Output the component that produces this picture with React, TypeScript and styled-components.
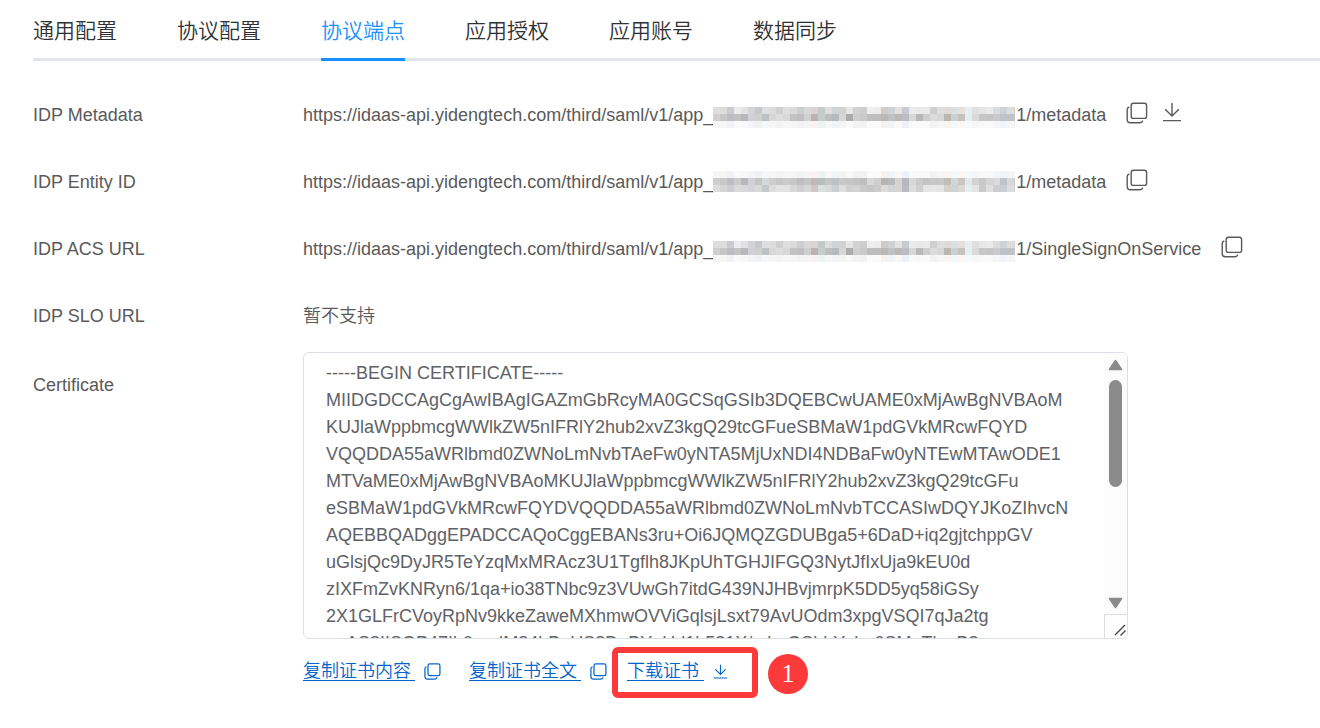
import React, { useState } from "react";
import styled, { createGlobalStyle } from "styled-components";

const GlobalStyle = createGlobalStyle`
  *, *::before, *::after { box-sizing: border-box; }
  body {
    margin: 0;
    background: #fff;
    color: #5a5a5a;
    font-family: "Liberation Sans", "Noto Sans CJK SC", sans-serif;
    font-size: 18px;
    line-height: 27px;
  }
  button, textarea { font: inherit; color: inherit; }
`;

const Page = styled.main`
  padding-left: 33px;
`;

const TabBar = styled.div`
  display: flex;
  gap: 60px;
  border-bottom: 3px solid #dfe4ed;
`;

const Tab = styled.button<{ $active: boolean }>`
  margin: 0 0 -3px;
  padding: 16px 0 12px;
  border: 0;
  border-bottom: 3px solid ${(p) => (p.$active ? "#1890ff" : "transparent")};
  background: none;
  color: ${(p) => (p.$active ? "#1890ff" : "#303133")};
  font-size: 21px;
  font-weight: 350;
  line-height: 30px;
  white-space: nowrap;
  cursor: pointer;
`;

const Endpoints = styled.section`
  padding-top: 21px;
`;

const Row = styled.div`
  display: grid;
  grid-template-columns: 270px minmax(0, 1fr);
  min-height: 67px;
  padding-top: 20px;
`;

const Label = styled.span`
  white-space: nowrap;
`;

const Value = styled.div`
  display: flex;
  align-items: center;
  height: 27px;
  font-weight: 350;
  white-space: nowrap;
`;

const RowIcons = styled.div`
  display: flex;
  gap: 14px;
  margin-left: 20px;
  padding-bottom: 6px;
`;

const IconButton = styled.button`
  display: flex;
  padding: 0;
  border: 0;
  background: none;
  cursor: pointer;
`;

const MosaicSvg = styled.svg<{ $raised: boolean }>`
  flex: none;
  display: block;
  margin: ${(p) => (p.$raised ? "0 1px 2px 0" : "4px 1px 0 0")};
`;

const CertRow = styled(Row)`
  padding-top: 2px;
`;

const CertLabel = styled.label`
  padding-top: 20px;
`;

const CertFrame = styled.div`
  display: flex;
  width: 100%;
  max-width: 825px;
  height: 287px;
  border: 1px solid #dcdfe6;
  border-radius: 6px;
  overflow: hidden;
`;

const CertText = styled.textarea`
  flex: 1;
  min-width: 0;
  padding: 7px 0 0 22px;
  border: 0;
  outline: 0;
  resize: none;
  background: none;
  color: #606266;
  white-space: pre;
  scrollbar-width: none;
`;

const ScrollTrack = styled.div`
  display: flex;
  flex-direction: column;
  align-items: center;
  width: 23px;
  padding-top: 6px;
  background: #fcfcfc;
`;

const Thumb = styled.div`
  width: 13px;
  height: 107px;
  margin: 9px 0 auto;
  border-radius: 7px;
  background: #8b8b8b;
`;

const Corner = styled.div`
  width: 23px;
  height: 24px;
  margin-top: 5px;
  border: solid #dcdcdc;
  border-width: 1px 0 0 1px;
  background: #fff;
`;

const Actions = styled.div`
  display: flex;
  align-items: center;
  height: 51px;
  margin-top: 8px;
  color: #0066cc;
  font-weight: 350;
`;

const ActionLink = styled.a`
  display: flex;
  align-items: center;
  gap: 9px;
  margin-right: 28px;
  padding-bottom: 2px;
  color: inherit;
  text-decoration: none;
  white-space: nowrap;
`;

const LinkText = styled.span`
  width: 112px;
  height: 18px;
  border-bottom: 1px solid currentColor;
  line-height: 17px;
`;

const ShortLinkText = styled(LinkText)`
  width: 77px;
`;

const Highlight = styled.div`
  display: flex;
  align-items: center;
  width: 146px;
  height: 51px;
  margin: 0 10px 0 -23px;
  padding-left: 9px;
  border: 6px solid #fc3a3a;
  border-radius: 6px;
`;

const StepBadge = styled.span`
  width: 40px;
  height: 40px;
  margin-top: 2px;
  border-radius: 50%;
  background: #fc3a3a;
  color: #fff;
  font-family: "Liberation Serif", serif;
  font-size: 25px;
  font-weight: 400;
  line-height: 40px;
  text-align: center;
`;

const CopyIcon = ({ size = 22 }: { size?: number }) => (
  <svg width={size} height={size} viewBox="0 0 22 22" fill="none" stroke="currentColor" strokeWidth={size < 20 ? 1.6 : 1.4} strokeLinecap="round">
    <rect x="5.2" y="1.2" width="15.4" height="15.2" rx="2.2" />
    <path d="M2.9 5.2Q1.2 5.6 1.2 7.6V17.6Q1.2 20.8 4.4 20.8H13.6Q16 20.8 16.6 19.1" />
  </svg>
);

const DownloadIcon = ({ size = 20 }: { size?: number }) => (
  <svg width={size} height={size} viewBox="0 0 20 20" fill="none" stroke="currentColor" strokeWidth={size < 20 ? 1.5 : 1.4}>
    <path d="M10 1V14M3.2 7.2L10 14L16.8 7.2M1 18.6H19" />
  </svg>
);

// Grey levels of the pixelated app id, one hex pair per 7px cell.
const levels = (text: string) => text.split(" ").map((pair) => parseInt(pair, 16));

const lightBand = levels(
  "dd dc cb ec e2 d4 c8 df dc d0 df da ce d8 d5 c8 de d4 d2 e6 d1 cd ee ec cd d2 e2 cb eb e9 ea cf de db de e0 ec e0 e6 ea db d1 dd d0"
);
const darkBand = levels(
  "cf c6 bd c2 b8 d1 cf c0 d7 dd d8 c2 bf cf b5 ca be bb d6 ac ce c9 be be b8 c2 b9 be d7 b8 ce dc d7 b7 ce c2 ec da c7 c5 cb c2 c2 c5"
);
const raisedDarkBand = levels(
  "cf c8 bf cc b8 d1 c5 d8 cf c6 cb c7 be c5 bb bc c5 c2 c9 c6 c3 bf d7 d0 b5 bb d4 b9 d8 cb c4 c7 c8 bf d5 c6 e6 d3 c9 d5 da c2 d8 c8"
);
const raisedLightBand = levels(
  "dc d5 ce da d8 d4 d9 c7 dd e4 e2 d7 cf d8 ca de d9 d0 df d0 d2 c9 c6 cb db d4 d5 bc dd cf e6 e7 e6 d1 d2 d8 ec e4 cb e0 cd ce dc cf"
);
const fadedBand = lightBand.map((level) => 255 - Math.round((255 - level) / 4));

const tints: Record<number, [number, number, number]> = {
  2: [-2, 0, 5], 5: [-2, 0, 3], 7: [-2, 1, 1], 12: [-2, 0, 4], 14: [5, -3, -2], 15: [-4, 2, 0],
  17: [-3, 0, 2], 24: [4, -1, -5], 25: [-5, 0, 4], 26: [5, -1, -5], 27: [-6, 0, 7],
  33: [3, -1, -5], 34: [-5, 2, 6], 35: [6, -1, -6], 36: [-8, 2, 9], 40: [-2, 0, 3], 41: [-3, 0, 5],
};

const cellColor = (base: number, column: number) => {
  const tint = tints[column] ?? [0, 0, 0];
  return `rgb(${tint.map((t) => Math.min(255, base + t)).join(",")})`;
};

const Mosaic = ({ raised }: { raised: boolean }) => {
  const bands = raised ? [fadedBand, raisedDarkBand, raisedLightBand] : [lightBand, darkBand, fadedBand];
  return (
    <MosaicSvg $raised={raised} width={302} height={21} viewBox="0 0 302 21" shapeRendering="crispEdges" aria-hidden="true">
      {bands.map((band, row) =>
        band.map((level, column) => (
          <rect key={`${row}-${column}`} x={column * 7} y={row * 7} width={7} height={7} fill={cellColor(level, column)} />
        ))
      )}
    </MosaicSvg>
  );
};

const tabs = ["通用配置", "协议配置", "协议端点", "应用授权", "应用账号", "数据同步"];

const endpoints = [
  { label: "IDP Metadata", suffix: "1/metadata", download: true, raised: false },
  { label: "IDP Entity ID", suffix: "1/metadata", download: false, raised: true },
  { label: "IDP ACS URL", suffix: "1/SingleSignOnService", download: false, raised: false },
];

const certificate = `-----BEGIN CERTIFICATE-----
MIIDGDCCAgCgAwIBAgIGAZmGbRcyMA0GCSqGSIb3DQEBCwUAME0xMjAwBgNVBAoM
KUJlaWppbmcgWWlkZW5nIFRlY2hub2xvZ3kgQ29tcGFueSBMaW1pdGVkMRcwFQYD
VQQDDA55aWRlbmd0ZWNoLmNvbTAeFw0yNTA5MjUxNDI4NDBaFw0yNTEwMTAwODE1
MTVaME0xMjAwBgNVBAoMKUJlaWppbmcgWWlkZW5nIFRlY2hub2xvZ3kgQ29tcGFu
eSBMaW1pdGVkMRcwFQYDVQQDDA55aWRlbmd0ZWNoLmNvbTCCASIwDQYJKoZIhvcN
AQEBBQADggEPADCCAQoCggEBANs3ru+Oi6JQMQZGDUBga5+6DaD+iq2gjtchppGV
uGlsjQc9DyJR5TeYzqMxMRAcz3U1Tgflh8JKpUhTGHJIFGQ3NytJfIxUja9kEU0d
zIXFmZvKNRyn6/1qa+io38TNbc9z3VUwGh7itdG439NJHBvjmrpK5DD5yq58iGSy
2X1GLFrCVoyRpNv9kkeZaweMXhmwOVViGqlsjLsxt79AvUOdm3xpgVSQI7qJa2tg
nnAS8IISOP47Ih0nndM84hBnUS8DnBYnUd1h581X/mhnGShhYzhn6SMnTlnnB8gg`;

export default function App() {
  const [active, setActive] = useState(2);
  return (
    <Page>
      <GlobalStyle />
      <TabBar role="tablist">
        {tabs.map((tab, i) => (
          <Tab key={tab} role="tab" aria-selected={i === active} $active={i === active} onClick={() => setActive(i)}>
            {tab}
          </Tab>
        ))}
      </TabBar>
      <Endpoints>
        {endpoints.map((item) => (
          <Row key={item.label}>
            <Label>{item.label}</Label>
            <Value>
              <span>https://idaas-api.yidengtech.com/third/saml/v1/app_</span>
              <Mosaic raised={item.raised} />
              <span>{item.suffix}</span>
              <RowIcons>
                <IconButton aria-label={`复制 ${item.label}`}><CopyIcon /></IconButton>
                {item.download && <IconButton aria-label={`下载 ${item.label}`}><DownloadIcon /></IconButton>}
              </RowIcons>
            </Value>
          </Row>
        ))}
        <Row>
          <Label>IDP SLO URL</Label>
          <Value>暂不支持</Value>
        </Row>
        <CertRow>
          <CertLabel htmlFor="certificate">Certificate</CertLabel>
          <div>
            <CertFrame>
              <CertText id="certificate" readOnly spellCheck={false} value={certificate} />
              <ScrollTrack aria-hidden="true">
                <svg width="15" height="12" viewBox="0 0 15 12">
                  <path d="M7.5 1.8L13.3 10.3H1.7Z" fill="#8b8b8b" stroke="#8b8b8b" strokeWidth="2" strokeLinejoin="round" />
                </svg>
                <Thumb />
                <svg width="15" height="12" viewBox="0 0 15 12">
                  <path d="M7.5 10.2L13.3 1.7H1.7Z" fill="#8b8b8b" stroke="#8b8b8b" strokeWidth="2" strokeLinejoin="round" />
                </svg>
                <Corner>
                  <svg width="22" height="22" viewBox="0 0 22 22" fill="none" stroke="#444" strokeWidth="1.4">
                    <path d="M10 20L20 10M15.5 20.5L20.5 15.5" />
                  </svg>
                </Corner>
              </ScrollTrack>
            </CertFrame>
            <Actions>
              <ActionLink href="#copy-content"><LinkText>复制证书内容</LinkText><CopyIcon size={17} /></ActionLink>
              <ActionLink href="#copy-full"><LinkText>复制证书全文</LinkText><CopyIcon size={17} /></ActionLink>
              <Highlight>
                <ActionLink href="#download"><ShortLinkText>下载证书</ShortLinkText><DownloadIcon size={15} /></ActionLink>
              </Highlight>
              <StepBadge>1</StepBadge>
            </Actions>
          </div>
        </CertRow>
      </Endpoints>
    </Page>
  );
}
